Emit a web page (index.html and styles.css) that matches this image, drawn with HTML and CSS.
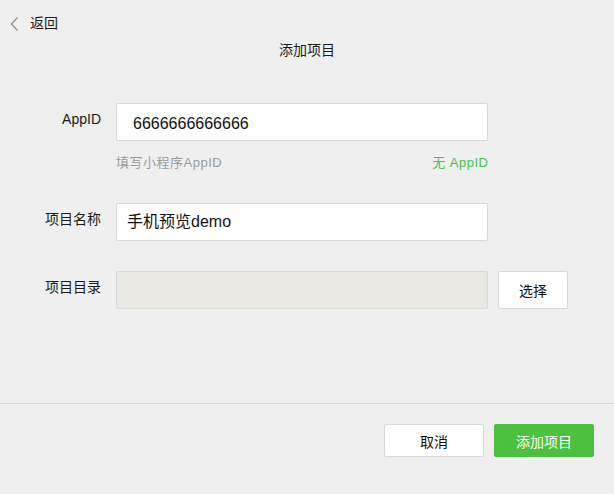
FILE: index.html
```html
<!DOCTYPE html>
<html lang="zh">
<head>
<meta charset="utf-8">
<title>添加项目</title>
<link rel="stylesheet" href="styles.css">
</head>
<body>
<div class="page">
  <div class="main">
    <div class="back">
      <svg class="chev" width="9" height="14" viewBox="0 0 9 14"><polyline points="7.5,0.5 1.5,7 7.5,13.5" fill="none" stroke="#8a8a8a" stroke-width="1.2"/></svg>
      <span>返回</span>
    </div>
    <div class="title">添加项目</div>
    <div class="form">
      <div class="row">
        <div class="label">AppID</div>
        <div class="field field-appid">6666666666666</div>
      </div>
      <div class="hint-row">
        <span class="hint">填写小程序AppID</span>
        <span class="noid">无 AppID</span>
      </div>
      <div class="row row-name">
        <div class="label">项目名称</div>
        <div class="field">手机预览demo</div>
      </div>
      <div class="row row-dir">
        <div class="label">项目目录</div>
        <div class="field field-disabled"></div>
        <div class="btn btn-select">选择</div>
      </div>
    </div>
  </div>
  <div class="footer">
    <div class="btn btn-cancel">取消</div>
    <div class="btn btn-primary">添加项目</div>
  </div>
</div>
</body>
</html>
```
FILE: styles.css
```css
html, body {
  margin: 0;
  padding: 0;
  background: #efefef;
}
body {
  font-family: "Liberation Sans", "Noto Sans CJK SC", sans-serif;
  color: #1a1a1a;
  font-size: 14px;
}
.page {
  display: flex;
  flex-direction: column;
  height: 494px;
}
.main {
  height: 403px;
}
.back {
  display: flex;
  align-items: center;
  padding: 13px 0 0 10px;
  height: 20px;
  line-height: 20px;
  font-size: 14px;
}
.chev {
  display: block;
  margin-right: 11px;
  margin-top: 1px;
}
.title {
  margin-top: 7px;
  text-align: center;
  line-height: 20px;
  font-size: 14px;
}
.form {
  margin-top: 43px;
  padding-left: 36px;
}
.row {
  display: flex;
  align-items: flex-start;
}
.label {
  width: 65px;
  text-align: right;
  margin-right: 15px;
  padding-top: 6px;
  line-height: 20px;
  font-size: 14px;
}
.field {
  box-sizing: border-box;
  width: 372px;
  height: 38px;
  background: #fff;
  border: 1px solid #d9d9d9;
  border-radius: 2px;
  padding: 0 10px;
  font-size: 16px;
  line-height: 36px;
  color: #111;
}
.field-appid {
  padding-left: 16px;
  padding-top: 3px;
  line-height: 33px;
}
.field-disabled {
  background: #e9e8e2;
}
.hint-row {
  display: flex;
  justify-content: space-between;
  width: 372px;
  margin-left: 80px;
  margin-top: 13px;
  line-height: 18px;
  font-size: 13px;
  letter-spacing: 0.5px;
}
.hint {
  color: #9a9a9a;
}
.noid {
  color: #4bc13f;
  margin-right: -0.5px;
}
.row-name {
  margin-top: 31px;
}
.row-dir {
  margin-top: 30px;
}
.btn {
  box-sizing: border-box;
  display: flex;
  align-items: center;
  justify-content: center;
  border: 1px solid #d9d9d9;
  border-radius: 2px;
  background: #fff;
  font-size: 14px;
  color: #111;
}
.btn-select {
  margin-left: 10px;
  width: 70px;
  height: 38px;
}
.footer {
  border-top: 1px solid #d8d8d8;
  display: flex;
  justify-content: flex-end;
  gap: 10px;
  padding: 20px 20px 0 0;
  flex: 1;
}
.btn-cancel,
.btn-primary {
  width: 100px;
  height: 33px;
}
.btn-primary {
  background: #4bc13f;
  border-color: #4bc13f;
  color: #fff;
}
```
